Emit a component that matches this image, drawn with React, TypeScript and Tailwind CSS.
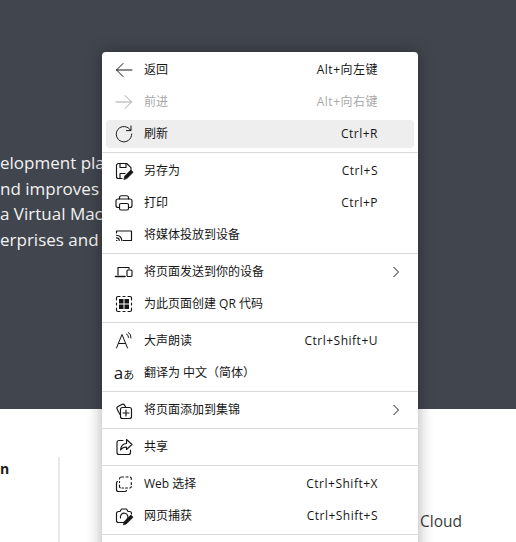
import type { ReactNode } from "react";

const ink = "#161616";

function Icon({ children, color = ink }: { children: ReactNode; color?: string }) {
  return (
    <svg
      viewBox="0 0 20 20"
      width="20"
      height="20"
      fill="none"
      stroke={color}
      strokeWidth="1.15"
      strokeLinecap="round"
      strokeLinejoin="round"
      className="shrink-0"
    >
      {children}
    </svg>
  );
}

const icons: Record<string, ReactNode> = {
  back: <path d="M18 10H2.500M9 3.500 2.500 10 9 16.500" strokeWidth="1" />,
  forward: <path d="M2 10h15.500M11 3.500l6.500 6.500-6.500 6.500" strokeWidth="1" />,
  refresh: (
    <g strokeWidth="1">
      <path d="M16.600 6.200A7.700 7.700 0 1 0 17.700 10" />
      <path d="M17 2v4.600h-4.600" />
    </g>
  ),
  save: (
    <>
      <path d="M8 17.500H4.500a2 2 0 0 1-2-2v-11a2 2 0 0 1 2-2h8.200l4.300 4.200v2.300" />
      <path d="M6 2.500v4h6v-4M6 17v-4.500h5" />
      <path d="m10 18.200.8-3.200 6-6 2.300 2.300-6 6z" fill={ink} strokeWidth="0.8" />
    </>
  ),
  print: (
    <>
      <path d="M5.500 6V4.700a2 2 0 0 1 2-2h5a2 2 0 0 1 2 2V6" />
      <path d="M5.500 14.500H4a2 2 0 0 1-2-2V8a2 2 0 0 1 2-2h12a2 2 0 0 1 2 2v4.500a2 2 0 0 1-2 2h-1.500" />
      <rect x="5.500" y="10.500" width="9" height="6.500" rx="1.500" />
    </>
  ),
  cast: (
    <>
      <path d="M2.500 8V6h15v9.500H9" />
      <path d="M2.500 15.500H3M2.500 12.800a2.800 2.800 0 0 1 2.800 2.700M2.500 10.200a5.300 5.300 0 0 1 5.300 5.300" />
    </>
  ),
  send: (
    <>
      <path d="M4 13V5.500h11V7" />
      <path d="M1.500 14.500h9.500" strokeWidth="1.600" />
      <rect x="13" y="8" width="5" height="6.500" rx="1" />
    </>
  ),
  qr: (
    <>
      <path d="M6 2.500H4a1.500 1.500 0 0 0-1.500 1.500v2M14 2.500h2A1.500 1.500 0 0 1 17.500 4v2M6 17.500H4A1.500 1.500 0 0 1 2.500 16v-2M14 17.500h2a1.500 1.500 0 0 0 1.500-1.500v-2M2.500 9v2M17.500 9v2M9 2.500h2M9 17.500h2" />
      <rect x="5" y="5" width="4.500" height="4.500" fill={ink} stroke="none" />
      <rect x="10.500" y="5" width="4.500" height="4.500" fill={ink} stroke="none" />
      <rect x="5" y="10.500" width="4.500" height="4.500" fill={ink} stroke="none" />
      <rect x="10.500" y="10.500" width="4.500" height="4.500" fill={ink} stroke="none" />
    </>
  ),
  read: (
    <g strokeWidth="1">
      <path d="M2.500 17 8 3.500 13.500 17M4.500 12.500h7" />
      <path d="M12.500 3a3.500 3.500 0 0 1 2 3.500M14.500 1.500a6 6 0 0 1 2.500 5.500" />
    </g>
  ),
  collection: (
    <>
      <path d="M6 14.500 3.200 9.200a2 2 0 0 1 .8-2.700L7.800 4.400a2 2 0 0 1 2.700.7L12 7.500" />
      <rect x="6.500" y="7.500" width="11" height="11" rx="2" />
      <path d="M12 10v6M9 13h6" />
    </>
  ),
  share: (
    <>
      <path d="M9 3.500H5a2 2 0 0 0-2 2v10a2 2 0 0 0 2 2h9.500a2 2 0 0 0 2-2V13" />
      <path d="M12.500 2.500 18 7.500l-5.500 5V10c-2.500 0-4.500.8-6 3 .3-3.800 2.500-6.300 6-6.500z" />
    </>
  ),
  select: (
    <>
      <path d="M8 3h1.500M12 3h2M16.500 3.200c.5.300.8.800.8 1.300v1M17.300 8.500v2M17.300 12.500c0 .8-.5 1.500-1.500 1.500M13.500 14h-2M9.500 14H8M6.200 13.800c-.5-.2-.7-.7-.7-1.300v-1.500M5.500 8.500v-1M5.500 5c0-1.200.8-2 1.700-2" />
      <path d="M3.500 7.500A1.800 1.800 0 0 0 2.500 9v6.500a2 2 0 0 0 2 2H11a1.800 1.800 0 0 0 1.500-1" />
    </>
  ),
  capture: (
    <>
      <path d="M11 16.500H4.500a2 2 0 0 1-2-2V7.500a2 2 0 0 1 2-2H6l1.500-2.500h5L14 5.500h1.500a2 2 0 0 1 2 2V8" />
      <path d="M6.500 12a3.800 3.800 0 1 1 6.500 1.500" />
      <path d="m9.500 18.500.8-3 6.500-6.500 2.200 2.200-6.500 6.500z" fill={ink} strokeWidth="0.8" />
    </>
  ),
};

type Item = { icon: string; label: string; shortcut?: string; disabled?: boolean; hover?: boolean; more?: boolean };

const sections: Item[][] = [
  [
    { icon: "back", label: "返回", shortcut: "Alt+向左键" },
    { icon: "forward", label: "前进", shortcut: "Alt+向右键", disabled: true },
    { icon: "refresh", label: "刷新", shortcut: "Ctrl+R", hover: true },
  ],
  [
    { icon: "save", label: "另存为", shortcut: "Ctrl+S" },
    { icon: "print", label: "打印", shortcut: "Ctrl+P" },
    { icon: "cast", label: "将媒体投放到设备" },
  ],
  [
    { icon: "send", label: "将页面发送到你的设备", more: true },
    { icon: "qr", label: "为此页面创建 QR 代码" },
  ],
  [
    { icon: "read", label: "大声朗读", shortcut: "Ctrl+Shift+U" },
    { icon: "translate", label: "翻译为 中文（简体）" },
  ],
  [{ icon: "collection", label: "将页面添加到集锦", more: true }],
  [{ icon: "share", label: "共享" }],
  [
    { icon: "select", label: "Web 选择", shortcut: "Ctrl+Shift+X" },
    { icon: "capture", label: "网页捕获", shortcut: "Ctrl+Shift+S" },
  ],
];

function Row({ item }: { item: Item }) {
  const color = item.disabled ? "#a8a8a8" : ink;
  return (
    <div className="flex h-[31.8px] items-center">
      <div
        className={`mx-1 flex h-[28px] flex-1 items-center rounded pl-2 pr-[13px] ${item.hover ? "bg-[#eeeeee]" : ""} ${item.disabled ? "text-[#a8a8a8]" : "text-[#161616]"}`}
      >
        {item.icon === "translate" ? (
          <span className="flex w-5 shrink-0 items-baseline justify-center leading-none">
            <span className="text-[17px]">a</span>
            <span className="text-[11px]">あ</span>
          </span>
        ) : (
          <Icon color={color}>{icons[item.icon]}</Icon>
        )}
        <span className="ml-[10px] flex-1 whitespace-nowrap">{item.label}</span>
        {item.shortcut && <span className="mr-[23px] whitespace-nowrap tracking-[0.5px]">{item.shortcut}</span>}
        {item.more && (
          <svg viewBox="0 0 8 12" width="8" height="12" fill="none" stroke={ink} strokeWidth="1" className="mr-[1px]">
            <path d="m1.500 1 5 5-5 5" />
          </svg>
        )}
      </div>
    </div>
  );
}

export default function App() {
  return (
    <div className="relative h-[542px] w-[516px] overflow-hidden bg-white font-['Open_Sans','Noto_Sans_CJK_SC',sans-serif]">
      <section className="flex h-[409px] flex-col bg-[#41454d] pt-[150px] text-[17px] leading-[25.500px] text-[#f2f2f2]">
        <p className="whitespace-nowrap">elopment plat</p>
        <p className="whitespace-nowrap">nd improves</p>
        <p className="whitespace-nowrap">a Virtual Mach</p>
        <p className="whitespace-nowrap">erprises and</p>
      </section>

      <div className="flex h-[133px]">
        <div className="w-[58px] pt-[50px] text-[14px] font-bold leading-5 text-[#1c1c1c]">n</div>
        <div className="mt-[48px] w-[2px] bg-[#e8e8e8]" />
        <p className="ml-[360px] mt-[100px] text-[15.500px] leading-6 text-[#3b3b3b]">Cloud</p>
      </div>

      <div className="absolute left-[102px] top-[52px] h-[520px] w-[316px] rounded-[4px] bg-white pt-[2.500px] text-[12px] shadow-[0_0_16px_rgba(0,0,0,0.32)]">
        {sections.map((rows, i) => (
          <div key={i}>
            {rows.map((item) => (
              <Row key={item.label} item={item} />
            ))}
            <div className="my-[2.200px] h-px bg-[#d9d9d9]" />
          </div>
        ))}
      </div>
    </div>
  );
}
